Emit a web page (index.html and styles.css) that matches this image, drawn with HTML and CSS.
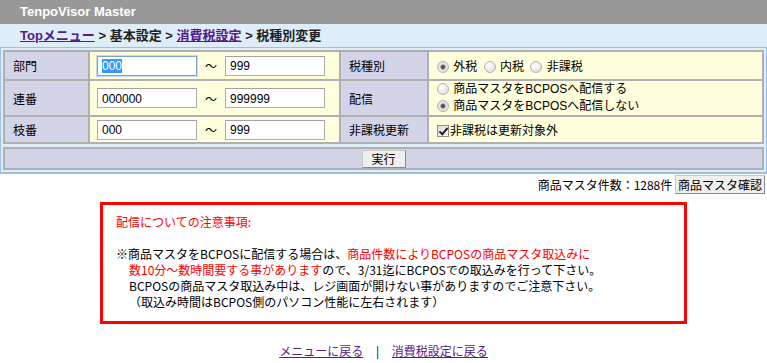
FILE: index.html
```html
<!DOCTYPE html>
<html lang="ja">
<head>
  <meta charset="UTF-8">
  <title>TenpoVisor Master</title>
  <link rel="stylesheet" href="styles.css">
</head>
<body>
  <div class="header">TenpoVisor Master</div>
  <div class="crumbs">
    <a href="#">Topメニュー</a> &gt; 基本設定 &gt; <a href="#">消費税設定</a> &gt; 税種別変更
  </div>

  <form class="frame">
    <table class="grid">
      <tr class="row1">
        <th class="c1">部門</th>
        <td class="c2"><input type="text" class="sel" value="000" autofocus onfocus="this.select()"><span class="tilde">〜</span><input type="text" value="999"></td>
        <th class="c3">税種別</th>
        <td class="c4">
          <label><input type="radio" name="tax" checked> 外税</label>
          <label><input type="radio" name="tax"> 内税</label>
          <label><input type="radio" name="tax"> 非課税</label>
        </td>
      </tr>
      <tr class="row2">
        <th>連番</th>
        <td><input type="text" value="000000"><span class="tilde">〜</span><input type="text" value="999999"></td>
        <th>配信</th>
        <td class="stack">
          <label><input type="radio" name="send"> 商品マスタをBCPOSへ配信する</label><br>
          <label><input type="radio" name="send" checked> 商品マスタをBCPOSへ配信しない</label>
        </td>
      </tr>
      <tr class="row3">
        <th>枝番</th>
        <td><input type="text" value="000"><span class="tilde">〜</span><input type="text" value="999"></td>
        <th>非課税更新</th>
        <td>
          <label class="chk"><input type="checkbox" checked>非課税は更新対象外</label>
        </td>
      </tr>
    </table>
    <table class="grid submit">
      <tr>
        <td><button type="submit">実行</button></td>
      </tr>
    </table>
  </form>

  <div class="count">
    商品マスタ件数：1288件 <button type="button">商品マスタ確認</button>
  </div>

  <div class="notice">
    <p class="red">配信についての注意事項:</p>
    <p class="body">
      ※商品マスタをBCPOSに配信する場合は、<span class="red">商品件数によりBCPOSの商品マスタ取込みに<br>
      数10分〜数時間要する事があります</span>ので、3/31迄にBCPOSでの取込みを行って下さい。<br>
      BCPOSの商品マスタ取込み中は、レジ画面が開けない事がありますのでご注意下さい。<br>
      （取込み時間はBCPOS側のパソコン性能に左右されます）
    </p>
  </div>

  <div class="footer">
    <a href="#">メニューに戻る</a>
    <span class="bar">|</span>
    <a href="#">消費税設定に戻る</a>
  </div>
</body>
</html>
```

FILE: styles.css
```css
body {
  margin: 0;
  font-family: "Liberation Sans", "Noto Sans CJK JP", sans-serif;
  font-size: 12px;
  color: #000;
  background-color: #fff;
}

a {
  color: #551a8b;
}

.header {
  height: 24px;
  line-height: 24px;
  padding-left: 20px;
  background-color: #999999;
  color: #fff;
  font-weight: bold;
  font-size: 13px;
}

.crumbs {
  height: 23px;
  line-height: 24px;
  padding-left: 20px;
  background-color: #dfedf9;
  font-weight: bold;
  font-size: 13px;
  color: #222;
}

.frame {
  margin: 0;
  padding: 2px;
  background-color: #dfedf9;
  border: 1px solid #9cbfe4;
  border-bottom-width: 2px;
}

.grid {
  width: 100%;
  border-collapse: collapse;
  border: 2px solid #b0b0b0;
}

.grid th,
.grid td {
  border: 2px solid #b0b0b0;
  padding: 0;
  text-align: left;
  font-weight: normal;
}

.grid th {
  background-color: #d4d4e8;
  padding-left: 8px;
  font-size: 12px;
}

.grid td {
  background-color: #ffffdd;
}

.grid td:nth-child(2) {
  padding-left: 7px;
}

.grid td:nth-child(4) {
  padding-left: 8px;
}

.c1 { width: 75px; }
.c2 { width: 242px; }
.c3 { width: 78px; }

.row1 { height: 29px; }
.row2 { height: 36px; }
.row3 { height: 27px; }

input[type="text"] {
  width: 100px;
  height: 20px;
  box-sizing: border-box;
  margin: 0;
  padding: 1px 4px 0;
  border: 1px solid #abadb3;
  border-top-color: #9fa2aa;
  font-family: "Liberation Sans", sans-serif;
  font-size: 12px;
  color: #000;
  vertical-align: middle;
}

input[type="text"]:focus {
  outline: none;
}

input.sel {
  border-color: #7da2ce;
  box-shadow: 0 0 0 1px #c5daf3;
}

input.sel::selection {
  background-color: #3399ff;
  color: #fff;
}

.tilde {
  display: inline-block;
  width: 28px;
  text-align: center;
  vertical-align: middle;
}

label {
  margin-right: 3px;
}

input[type="radio"] {
  appearance: none;
  width: 12px;
  height: 12px;
  margin: 0 1px 0 0;
  border: 1px solid #b4b4b4;
  border-radius: 50%;
  background: radial-gradient(circle at 40% 35%, #ffffff 0, #e4e4e4 70%, #d0d0d0 100%);
  vertical-align: -2px;
}

input[type="radio"]:checked {
  background: radial-gradient(circle, #4a4a4a 0, #6a6a6a 2px, #e8e8e8 3px, #d8d8d8 100%);
}

.stack {
  line-height: 17px;
}

input[type="checkbox"] {
  appearance: none;
  position: relative;
  width: 12px;
  height: 12px;
  margin: 0 1px 0 0;
  border: 1px solid #8e8f8f;
  background: linear-gradient(135deg, #dcdcdc, #ffffff);
  vertical-align: -2px;
}

input[type="checkbox"]:checked::after {
  content: "";
  position: absolute;
  left: 3px;
  top: 0px;
  width: 3px;
  height: 7px;
  border: solid #222;
  border-width: 0 2px 2px 0;
  transform: rotate(40deg);
}

.submit {
  margin-top: 3px;
}

.submit td {
  height: 19px;
  background-color: #d4d4e8;
  text-align: center;
}

button {
  font-family: "Noto Sans CJK JP", sans-serif;
  font-size: 12px;
  line-height: 14px;
  padding: 1px 8px;
  margin: 0;
  background-color: #efefef;
  border: 1px solid #8a8a8a;
  border-top-color: #c8c8c8;
  border-left-color: #c8c8c8;
  color: #000;
}

.submit button {
  width: 44px;
  height: 18px;
  padding: 0;
}

.count {
  text-align: right;
  padding: 1px 2px 0 0;
  height: 19px;
  line-height: 19px;
  font-family: "Noto Sans CJK JP", sans-serif;
  font-size: 12px;
}

.count button {
  height: 19px;
  padding: 0 2px;
  vertical-align: top;
}

.notice {
  width: 587px;
  box-sizing: border-box;
  margin: 8px 0 0 100px;
  padding: 9px 10px 11px 13px;
  border: 3px solid #ff0000;
  font-family: "Noto Sans CJK JP", sans-serif;
  font-size: 12px;
  line-height: 16px;
}

.notice p {
  margin: 0;
}

.notice .body {
  margin-top: 16px;
  padding-left: 13px;
  text-indent: -13px;
}

.red {
  color: #ff0000;
}

.footer {
  margin-top: 18px;
  text-align: center;
  font-family: "Noto Sans CJK JP", sans-serif;
  font-size: 12px;
}

.bar {
  margin: 0 10px;
}
```
